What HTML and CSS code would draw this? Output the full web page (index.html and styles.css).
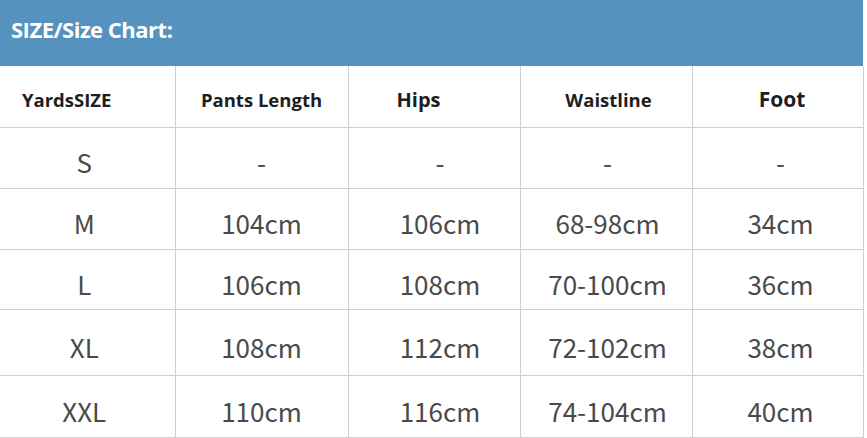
FILE: index.html
```html
<!DOCTYPE html>
<html>
<head>
<meta charset="utf-8">
<link rel="stylesheet" href="styles.css">
</head>
<body>
<div class="chart">
  <div class="title">SIZE/Size Chart:</div>
  <table class="sizes">
    <colgroup>
      <col class="c1"><col class="c2"><col class="c3"><col class="c4"><col class="c5">
    </colgroup>
    <tr class="head">
      <th class="yards">YardsSIZE</th>
      <th class="pants">Pants Length</th>
      <th class="hips">Hips</th>
      <th class="waist">Waistline</th>
      <th class="foot">Foot</th>
    </tr>
    <tr class="r1"><td>S</td><td>-</td><td>-</td><td>-</td><td>-</td></tr>
    <tr class="r2"><td>M</td><td>104cm</td><td>106cm</td><td>68-98cm</td><td>34cm</td></tr>
    <tr class="r3"><td>L</td><td>106cm</td><td>108cm</td><td>70-100cm</td><td>36cm</td></tr>
    <tr class="r4"><td>XL</td><td>108cm</td><td>112cm</td><td>72-102cm</td><td>38cm</td></tr>
    <tr class="r5"><td>XXL</td><td>110cm</td><td>116cm</td><td>74-104cm</td><td>40cm</td></tr>
  </table>
</div>
</body>
</html>
```
FILE: styles.css
```css
html, body {
  margin: 0;
  padding: 0;
  background: #fff;
}
.chart {
  width: 863px;
}
.title {
  height: 66px;
  background: #5592bd;
  color: #fff;
  font-family: "Open Sans", "Noto Sans", sans-serif;
  font-weight: 700;
  font-size: 22px;
  letter-spacing: -0.5px;
  padding-left: 11px;
  line-height: 58px;
  box-sizing: border-box;
}
.sizes {
  width: 863px;
  border-collapse: collapse;
  table-layout: fixed;
}
.c1 { width: 175px; }
.c2 { width: 173px; }
.c3 { width: 172px; }
.c4 { width: 172px; }
.c5 { width: 171px; }
.sizes td, .sizes th {
  border: 1px solid #d0d0d0;
  text-align: center;
  padding: 0;
}
.sizes tr > :first-child { border-left: none; }
.sizes tr.head > * { border-top: none; }
.sizes th {
  font-family: "Open Sans", "Noto Sans", sans-serif;
  font-weight: 700;
  font-size: 18px;
  color: #1e1e1e;
  padding-top: 6px;
}
.sizes th.yards { text-align: left; padding-left: 22px; font-size: 18.5px; }
.sizes th.pants { font-size: 18.5px; }
.sizes th.hips { font-size: 20px; padding-right: 31px; }
.sizes th.waist { font-size: 18.5px; padding-left: 5px; }
.sizes th.foot { font-size: 21px; padding-left: 9px; }
.sizes td {
  font-family: "Noto Sans CJK SC", "Noto Sans", sans-serif;
  font-size: 26px;
  color: #4a4a4a;
  padding-top: 8px;
}
.sizes td:nth-child(1) { padding-right: 6px; }
.sizes td:nth-child(3) { padding-left: 12px; }
.sizes td:nth-child(4) { padding-left: 3px; }
.sizes td:nth-child(5) { padding-left: 6px; }
.sizes tr.head { height: 61px; }
.sizes tr.r1 { height: 61px; }
.sizes tr.r2 { height: 61px; }
.sizes tr.r3 { height: 60px; }
.sizes tr.r4 { height: 66px; }
.sizes tr.r5 { height: 62px; }
```
